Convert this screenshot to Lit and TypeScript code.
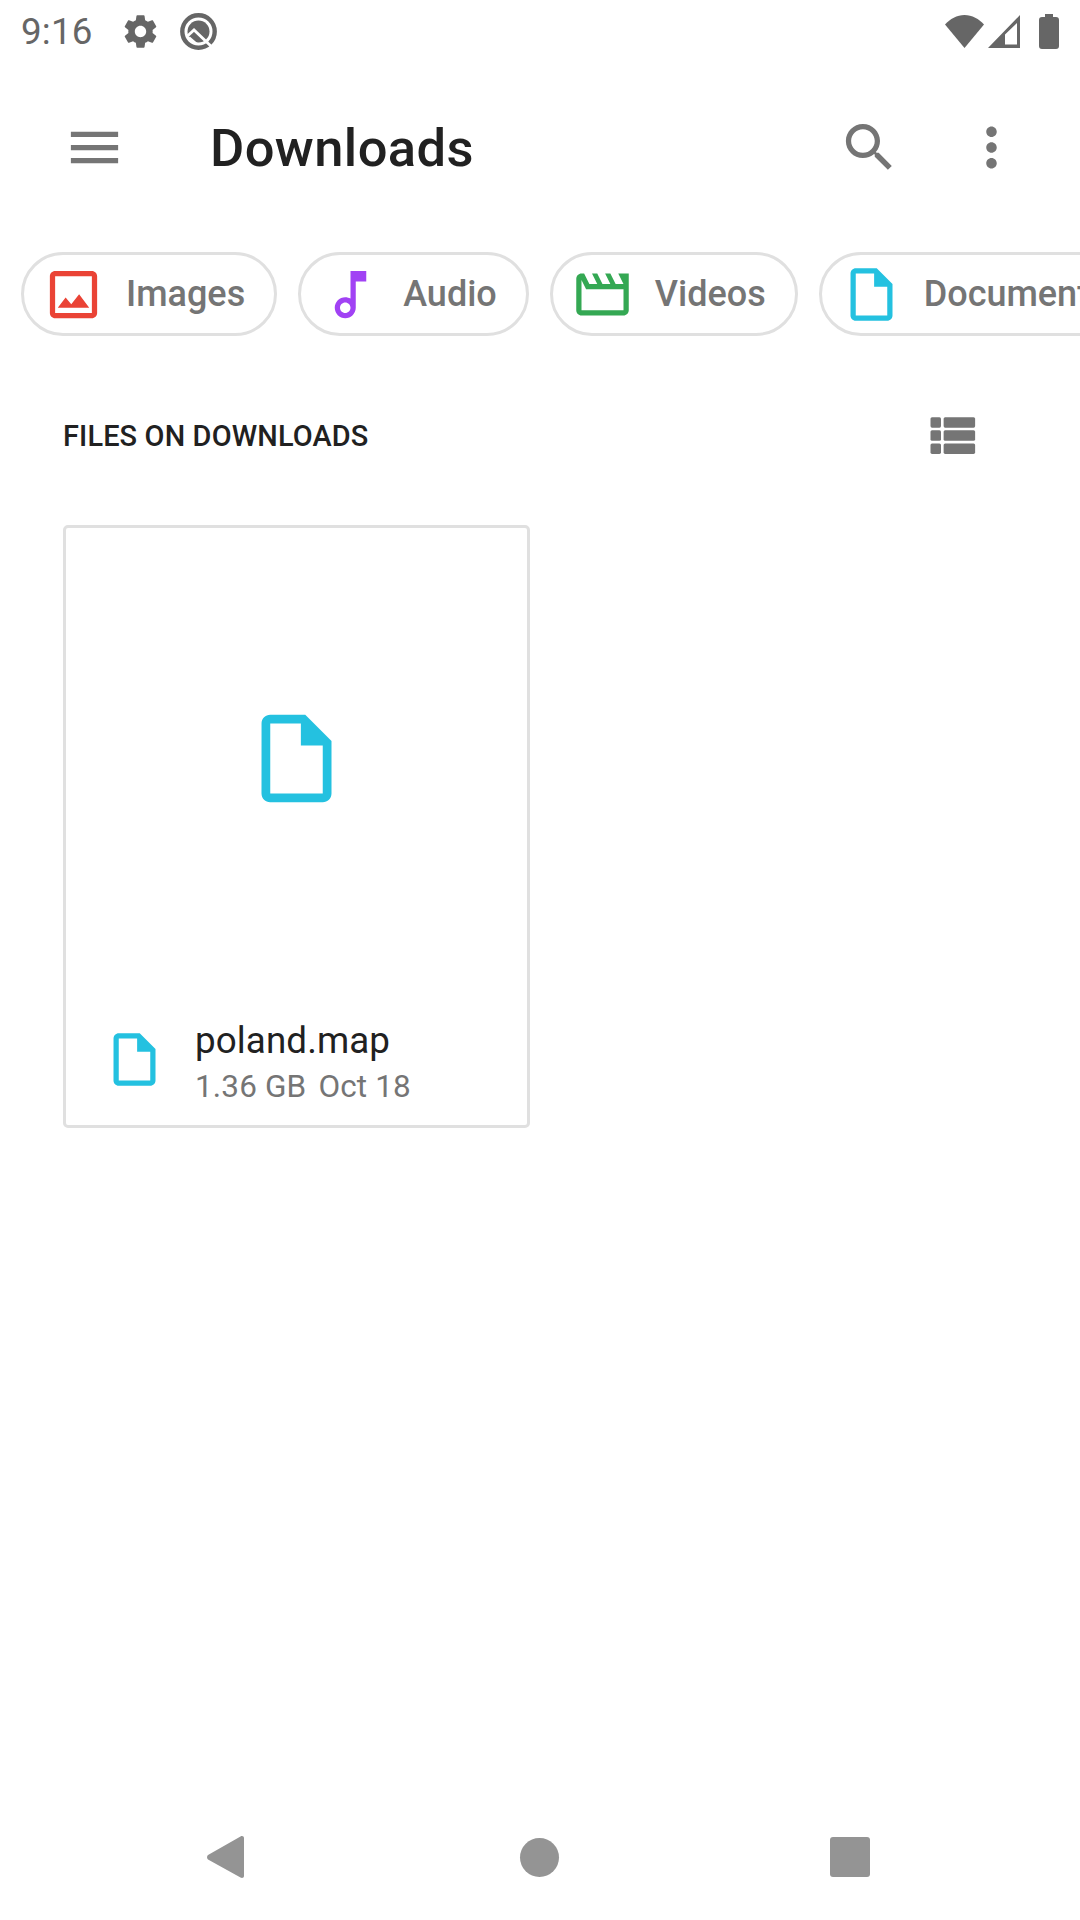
import { LitElement, html, css, svg } from 'lit';
import { customElement } from 'lit/decorators.js';

const DOC = 'M14 2H6c-1.1 0-1.99.9-1.99 2L4 20c0 1.1.89 2 1.99 2H18c1.1 0 2-.9 2-2V8l-6-6zM6 20V4h7v5h5v11H6z';
const IMAGE = 'M19 5v14H5V5h14m0-2H5c-1.1 0-2 .9-2 2v14c0 1.1.9 2 2 2h14c1.1 0 2-.9 2-2V5c0-1.1-.9-2-2-2zm-4.86 8.86l-3 3.87L9 13.14 6 17h12l-3.86-5.14z';
const AUDIO = 'M12 3v10.55c-.59-.34-1.27-.55-2-.55-2.21 0-4 1.79-4 4s1.79 4 4 4 4-1.79 4-4V7h4V3h-6zm-2 16c-1.1 0-2-.9-2-2s.9-2 2-2 2 .9 2 2-.9 2-2 2z';
const VIDEO = 'M4 6.47L5.76 10H20v8H4V6.47M22 4h-4l2 4h-3l-2-4h-2l2 4h-3l-2-4H8l2 4H7L5 4H4c-1.1 0-1.99.9-1.99 2L2 18c0 1.1.9 2 2 2h16c1.1 0 2-.9 2-2V4z';
const MENU = 'M3 18h18v-2H3v2zm0-5h18v-2H3v2zm0-7v2h18V6H3z';
const SEARCH = 'M15.5 14h-.79l-.28-.27C15.41 12.59 16 11.11 16 9.5 16 5.91 13.09 3 9.5 3S3 5.91 3 9.5 5.91 16 9.5 16c1.61 0 3.09-.59 4.23-1.57l.27.28v.79l5 4.99L20.49 19l-4.99-5zm-6 0C7.01 14 5 11.99 5 9.5S7.01 5 9.5 5 14 7.01 14 9.5 11.99 14 9.5 14z';
const MORE = 'M12 8c1.1 0 2-.9 2-2s-.9-2-2-2-2 .9-2 2 .9 2 2 2zm0 2c-1.1 0-2 .9-2 2s.9 2 2 2 2-.9 2-2-.9-2-2-2zm0 6c-1.1 0-2 .9-2 2s.9 2 2 2 2-.9 2-2-.9-2-2-2z';
const GEAR = 'M19.43 12.98c.04-.32.07-.64.07-.98s-.03-.66-.07-.98l2.11-1.65c.19-.15.24-.42.12-.64l-2-3.46c-.12-.22-.39-.3-.61-.22l-2.49 1c-.52-.4-1.08-.73-1.69-.98l-.38-2.65C14.46 2.18 14.25 2 14 2h-4c-.25 0-.46.18-.49.42l-.38 2.65c-.61.25-1.17.59-1.69.98l-2.49-1c-.23-.09-.49 0-.61.22l-2 3.46c-.13.22-.07.49.12.64l2.11 1.65c-.04.32-.07.65-.07.98s.03.66.07.98l-2.11 1.65c-.19.15-.24.42-.12.64l2 3.46c.12.22.39.3.61.22l2.49-1c.52.4 1.08.73 1.69.98l.38 2.65c.03.24.24.42.49.42h4c.25 0 .46-.18.49-.42l.38-2.65c.61-.25 1.17-.59 1.69-.98l2.49 1c.23.09.49 0 .61-.22l2-3.46c.12-.22.07-.49-.12-.64l-2.11-1.65zM12 15.5c-1.93 0-3.5-1.57-3.5-3.5s1.57-3.5 3.5-3.5 3.5 1.57 3.5 3.5-1.57 3.5-3.5 3.5z';

const icon = (d: string, size: number, cls = '') => html`
  <svg class=${cls} width=${size} height=${size} viewBox="0 0 24 24">${svg`<path d=${d} fill="currentColor"></path>`}</svg>
`;

const chips = [
  { label: 'Images', d: IMAGE, cls: 'red' },
  { label: 'Audio', d: AUDIO, cls: 'purple' },
  { label: 'Videos', d: VIDEO, cls: 'green' },
  { label: 'Documents', d: DOC, cls: 'cyan' },
];

@customElement('app-root')
export class AppRoot extends LitElement {
  static styles = css`
    :host {
      display: flex;
      flex-direction: column;
      width: 1080px;
      height: 1920px;
      background: #fff;
      overflow: hidden;
      font-family: Roboto, 'Liberation Sans', sans-serif;
    }
    svg {
      display: block;
      flex: none;
    }

    .status {
      height: 63px;
      display: flex;
      align-items: center;
      color: #666;
      padding-left: 21px;
      padding-right: 21px;
    }
    .time {
      font-size: 36.75px;
      letter-spacing: 0.2px;
      width: 100px;
      line-height: 63px;
    }
    .gear {
      margin-right: 20px;
    }
    .status .right {
      margin-left: auto;
      display: flex;
      align-items: center;
    }
    .wifi {
      margin-right: 4px;
    }
    .signal {
      margin-right: 19px;
    }

    .toolbar {
      height: 168px;
      display: flex;
      align-items: center;
      color: #757575;
      padding-left: 63px;
      padding-right: 57px;
      box-sizing: border-box;
    }
    .title {
      font-size: 52.5px;
      font-weight: 500;
      letter-spacing: 0.4px;
      line-height: 63px;
      padding-top: 2px;
      color: #212121;
      margin-left: 84px;
      flex: 1;
    }
    .toolbar .more {
      margin-left: 59px;
    }

    .chips {
      display: flex;
      gap: 21px;
      padding: 21px 0 0 21px;
      overflow: hidden;
    }
    .chip {
      flex: none;
      height: 84px;
      box-sizing: border-box;
      display: flex;
      align-items: center;
      border: 3px solid #e0e0e0;
      border-radius: 42px;
      padding: 0 29px 0 18px;
      font-size: 36px;
      font-weight: 500;
      color: #757575;
    }
    .chip span {
      margin-left: 21px;
    }
    .red {
      color: #ea4335;
    }
    .purple {
      color: #a142f4;
    }
    .green {
      color: #34a853;
    }
    .cyan {
      color: #24c1e0;
    }

    .section {
      display: flex;
      align-items: center;
      justify-content: space-between;
      margin-top: 68px;
      height: 63px;
      padding: 0 97px 0 63px;
    }
    .section h2 {
      margin: 0;
      font-size: 28.9px;
      font-weight: 500;
      letter-spacing: 0.15px;
      color: #212121;
    }
    .section svg {
      color: #757575;
    }

    .card {
      margin: 58px 0 0 63px;
      width: 467px;
      height: 603px;
      box-sizing: border-box;
      border: 3px solid #e0e0e0;
      border-radius: 5px;
      display: flex;
      flex-direction: column;
    }
    .thumb {
      height: 460px;
      display: flex;
      align-items: center;
      justify-content: center;
    }
    .label {
      display: flex;
      padding-left: 37px;
      padding-top: 40px;
    }
    .meta {
      margin-left: 29px;
      margin-top: -12px;
    }
    .name {
      font-size: 36.75px;
      letter-spacing: 0.1px;
      line-height: 50px;
      color: #212121;
    }
    .sub {
      font-size: 31.5px;
      letter-spacing: 0.15px;
      line-height: 42px;
      color: #757575;
      display: flex;
      gap: 12px;
    }

    .nav {
      margin-top: auto;
      height: 126px;
      display: flex;
      align-items: center;
      padding-left: 207px;
      color: #949494;
    }
    .circle {
      width: 39px;
      height: 39px;
      margin-left: 276px;
      border-radius: 50%;
      background: #949494;
    }
    .square {
      width: 40px;
      height: 40px;
      margin-left: 271px;
      border-radius: 3px;
      background: #949494;
    }
  `;

  render() {
    return html`
      <div class="status">
        <div class="time">9:16</div>
        ${icon(GEAR, 39, 'gear')}
        <svg width="37" height="37" viewBox="0 0 37 37">
          <circle cx="18.500" cy="18.500" r="16.200" fill="none" stroke="currentColor" stroke-width="4.400"></circle>
          <circle cx="18.500" cy="18.500" r="11" fill="currentColor"></circle>
          <path d="M7.500 23L14 17l20 19" fill="none" stroke="#fff" stroke-width="2.800"></path>
          <path d="M9 24.500l7.500 6.500" fill="none" stroke="#fff" stroke-width="2.400"></path>
        </svg>
        <div class="right">
          <svg class="wifi" width="39" height="33" viewBox="0 0 39 33">
            <path fill="currentColor" d="M19.500 33L0 9.500C5 4 12 0 19.500 0S34 4 39 9.500z"></path>
          </svg>
          <svg class="signal" width="32" height="33" viewBox="0 0 32 33">
            <path fill="currentColor" fill-rule="evenodd" d="M32 0V33H0zM29 8L17 19.500V29.500H29z"></path>
          </svg>
          <svg width="20" height="35" viewBox="0 0 20 35">
            <path fill="currentColor" d="M6 0h8v3h3a3 3 0 0 1 3 3v26a3 3 0 0 1-3 3H3a3 3 0 0 1-3-3V6a3 3 0 0 1 3-3h3z"></path>
          </svg>
        </div>
      </div>

      <div class="toolbar">
        ${icon(MENU, 63)}
        <div class="title">Downloads</div>
        ${icon(SEARCH, 63)} ${icon(MORE, 63, 'more')}
      </div>

      <div class="chips">
        ${chips.map(
          c => html`<div class="chip">${icon(c.d, 63, c.cls)}<span>${c.label}</span></div>`
        )}
      </div>

      <div class="section">
        <h2>FILES ON DOWNLOADS</h2>
        <svg width="63" height="63" viewBox="0 0 24 24" fill="currentColor">
          <rect x="4" y="5" width="4" height="4" rx=".6"></rect>
          <rect x="4" y="10" width="4" height="4" rx=".6"></rect>
          <rect x="4" y="15" width="4" height="4" rx=".6"></rect>
          <rect x="9" y="5" width="12" height="4" rx=".6"></rect>
          <rect x="9" y="10" width="12" height="4" rx=".6"></rect>
          <rect x="9" y="15" width="12" height="4" rx=".6"></rect>
        </svg>
      </div>

      <div class="card">
        <div class="thumb">${icon(DOC, 105, 'cyan')}</div>
        <div class="label">
          ${icon(DOC, 63, 'cyan')}
          <div class="meta">
            <div class="name">poland.map</div>
            <div class="sub"><span>1.36 GB</span><span>Oct 18</span></div>
          </div>
        </div>
      </div>

      <div class="nav">
        <svg width="37" height="42" viewBox="0 0 37 42">
          <path fill="currentColor" d="M33.500 .5c1.600-1 3.500-.3 3.500 1.500v38c0 1.800-1.900 2.500-3.500 1.500L1 23.500c-1.300-1-1.300-3.500 0-4.500z"></path>
        </svg>
        <div class="circle"></div>
        <div class="square"></div>
      </div>
    `;
  }
}
